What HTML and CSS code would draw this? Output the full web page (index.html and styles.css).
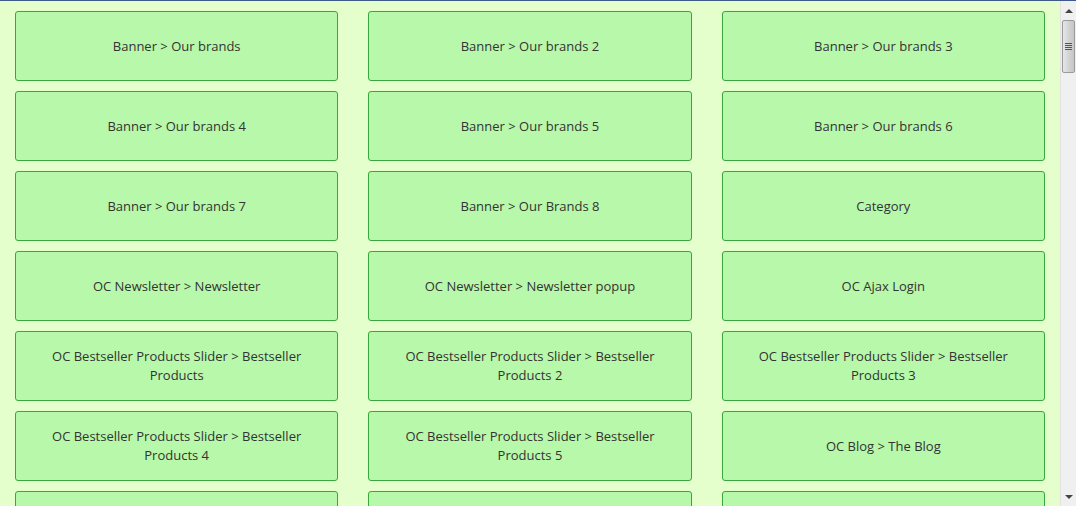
FILE: index.html
```html
<!DOCTYPE html>
<html>
<head>
<meta charset="utf-8">
<link rel="stylesheet" href="styles.css">
</head>
<body>
<div class="window">
  <div class="main">
    <div class="card">Banner &gt; Our brands</div>
    <div class="card">Banner &gt; Our brands 2</div>
    <div class="card">Banner &gt; Our brands 3</div>
    <div class="card">Banner &gt; Our brands 4</div>
    <div class="card">Banner &gt; Our brands 5</div>
    <div class="card">Banner &gt; Our brands 6</div>
    <div class="card">Banner &gt; Our brands 7</div>
    <div class="card">Banner &gt; Our Brands 8</div>
    <div class="card">Category</div>
    <div class="card">OC Newsletter &gt; Newsletter</div>
    <div class="card">OC Newsletter &gt; Newsletter popup</div>
    <div class="card">OC Ajax Login</div>
    <div class="card">OC Bestseller Products Slider &gt; Bestseller Products</div>
    <div class="card">OC Bestseller Products Slider &gt; Bestseller Products 2</div>
    <div class="card">OC Bestseller Products Slider &gt; Bestseller Products 3</div>
    <div class="card">OC Bestseller Products Slider &gt; Bestseller Products 4</div>
    <div class="card">OC Bestseller Products Slider &gt; Bestseller Products 5</div>
    <div class="card">OC Blog &gt; The Blog</div>
    <div class="card"></div>
    <div class="card"></div>
    <div class="card"></div>
  </div>
  <div class="scrollbar">
    <div class="arrow arrow-up"></div>
    <div class="thumb"><div class="grip"></div></div>
    <div class="track"></div>
    <div class="arrow arrow-down"></div>
  </div>
</div>
</body>
</html>
```

FILE: styles.css
```css
html, body {
  margin: 0;
  padding: 0;
  height: 100%;
  overflow: hidden;
}
body {
  background: #e4ffcb;
  font-family: "Open Sans", "Liberation Sans", sans-serif;
}
.window {
  display: flex;
  height: 505px;
  border-top: 1px solid #3d5a8a;
  overflow: hidden;
}
.main {
  flex: 1;
  padding: 10px 15px;
  display: grid;
  grid-template-columns: repeat(3, 1fr);
  grid-auto-rows: 70px;
  column-gap: 30px;
  row-gap: 10px;
  align-content: start;
}
.card {
  box-sizing: border-box;
  background: #b8f8aa;
  border: 1px solid #38a83e;
  border-radius: 3px;
  display: flex;
  align-items: center;
  justify-content: center;
  text-align: center;
  padding: 0 30px;
  font-size: 13px;
  line-height: 19px;
  color: #333333;
}
.scrollbar {
  box-sizing: border-box;
  width: 16px;
  flex: 0 0 16px;
  background: #f0f0f0;
  border-left: 1px solid #e2e2e2;
  display: flex;
  flex-direction: column;
  align-items: center;
}
.arrow {
  width: 0;
  height: 0;
  border-left: 4px solid transparent;
  border-right: 4px solid transparent;
  flex: 0 0 auto;
}
.arrow-up {
  margin-top: 8px;
  margin-bottom: 7px;
  border-bottom: 4px solid #444;
}
.arrow-down {
  margin-top: 5px;
  margin-bottom: 7px;
  border-top: 4px solid #444;
}
.track {
  flex: 1;
}
.thumb {
  box-sizing: border-box;
  width: 13px;
  height: 53px;
  border: 1px solid #9a9a9a;
  border-radius: 2px;
  background: linear-gradient(to right, #e6e6e6, #d4d4d4 50%, #c6c6c6);
  display: flex;
  align-items: center;
  justify-content: center;
}
.grip {
  width: 7px;
  height: 7px;
  background: repeating-linear-gradient(to bottom, #555 0, #555 1px, transparent 1px, transparent 2px);
}
```
